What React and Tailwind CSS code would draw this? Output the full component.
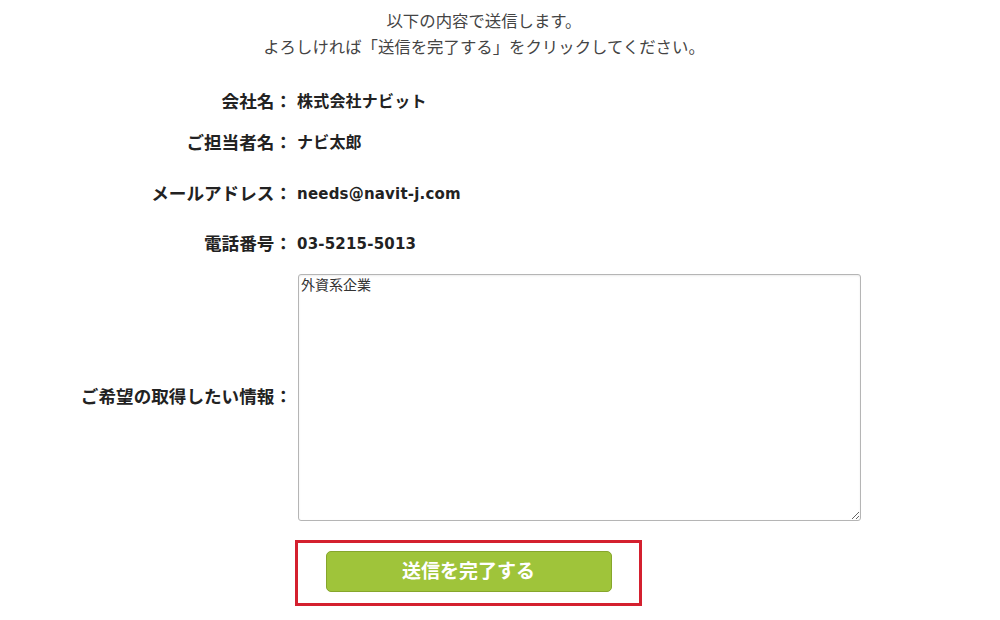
export default function App() {
  const font = { fontFamily: '"DejaVu Sans", "Noto Sans CJK JP", sans-serif' };
  const rows = [
    { label: "会社名：", value: "株式会社ナビット", mt: "mt-[29px]", size: "text-[16px]" },
    { label: "ご担当者名：", value: "ナビ太郎", mt: "mt-[17px]", size: "text-[16px]" },
    { label: "メールアドレス：", value: "needs@navit-j.com", mt: "mt-[27px]", size: "text-[15px]" },
    { label: "電話番号：", value: "03-5215-5013", mt: "mt-[26px]", size: "text-[15px]" },
  ];
  return (
    <div className="w-[1000px] h-[620px] bg-white text-[#222] overflow-hidden" style={font}>
      <div className="pt-[9px] w-[968px] text-center text-[16.4px] leading-[26px] text-[#444]">
        <p>以下の内容で送信します。</p>
        <p>よろしければ「送信を完了する」をクリックしてください。</p>
      </div>
      {rows.map((r) => (
        <div key={r.label} className={`flex items-center h-[24px] ${r.mt}`}>
          <div className="w-[292px] text-right font-bold text-[17.6px] whitespace-nowrap">{r.label}</div>
          <div className={`pl-[5px] font-bold tracking-[0.2px] whitespace-nowrap ${r.size}`}>{r.value}</div>
        </div>
      ))}
      <div className="flex items-center mt-[18px]">
        <div className="w-[292px] text-right font-bold text-[17.6px] whitespace-nowrap">ご希望の取得したい情報：</div>
        <textarea
          readOnly
          defaultValue="外資系企業"
          className="ml-[6px] w-[563px] h-[247px] border border-[#b5b5b5] rounded-[3px] px-[2px] py-0 text-[14px] leading-[20px] text-[#333] shadow-[inset_0_1px_2px_rgba(0,0,0,0.08)] outline-none"
          style={font}
        />
      </div>
      <div className="mt-[19px] ml-[295px] w-[347px] h-[66px] border-[3px] border-[#d4202f] flex items-start justify-center pt-[8px]">
        <button
          className="w-[286px] h-[41px] rounded-[5px] bg-[#9fc43a] border border-[#86a62c] text-white font-bold text-[19px]"
          style={font}
        >
          送信を完了する
        </button>
      </div>
    </div>
  );
}
